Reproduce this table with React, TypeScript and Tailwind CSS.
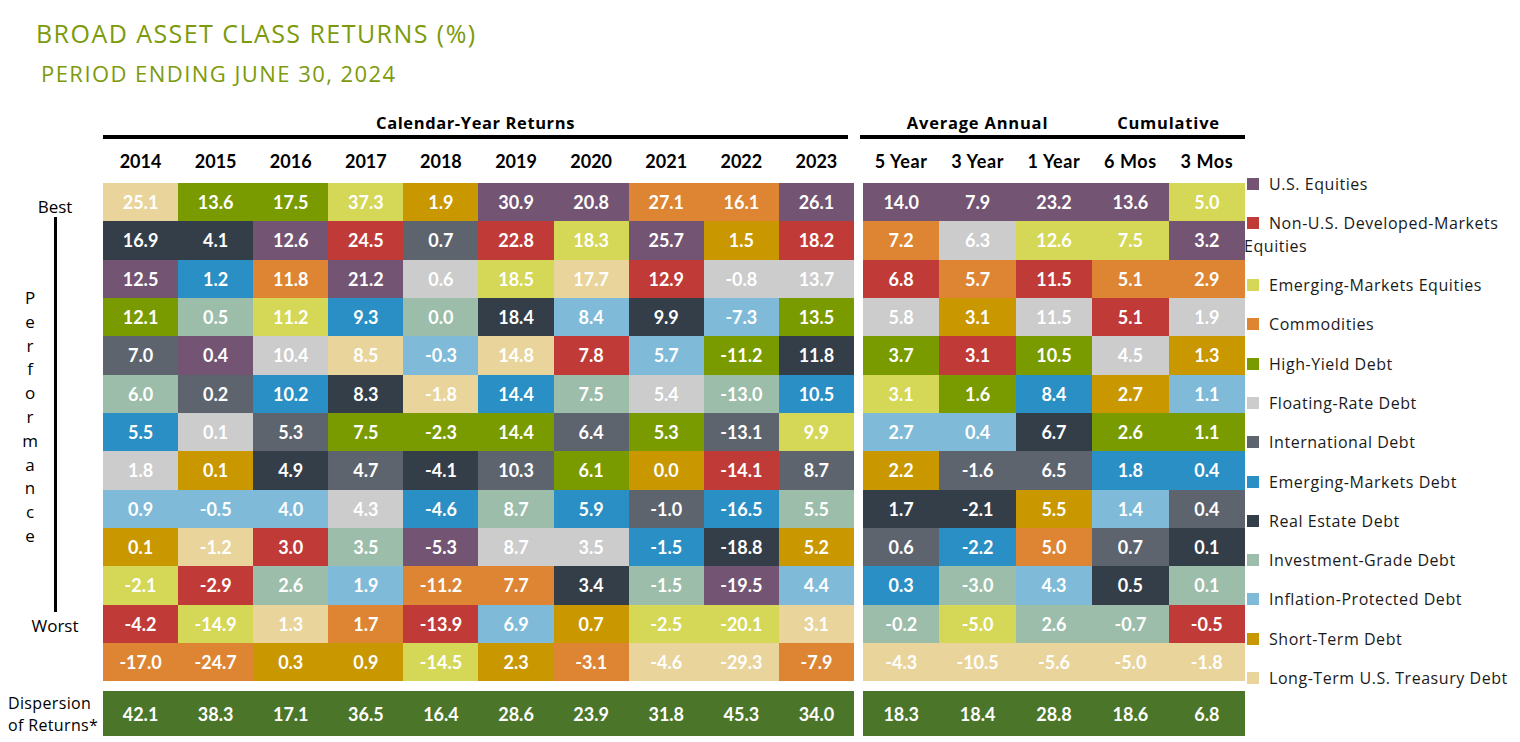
import React from "react";

type Cat =
  | "US"
  | "NU"
  | "EME"
  | "COM"
  | "HY"
  | "FR"
  | "ID"
  | "EMD"
  | "RE"
  | "IG"
  | "IP"
  | "ST"
  | "LT";

const bg: Record<Cat, string> = {
  US: "bg-[#735472]",
  NU: "bg-[#c03a37]",
  EME: "bg-[#d5d756]",
  COM: "bg-[#dd8533]",
  HY: "bg-[#7a9b00]",
  FR: "bg-[#cccccc]",
  ID: "bg-[#5d646e]",
  EMD: "bg-[#2a8fc4]",
  RE: "bg-[#333e48]",
  IG: "bg-[#9bbda9]",
  IP: "bg-[#7fbbd9]",
  ST: "bg-[#c99700]",
  LT: "bg-[#e9d49b]",
};

const legend: { cat: Cat; label: React.ReactNode }[] = [
  { cat: "US", label: "U.S. Equities" },
  {
    cat: "NU",
    label: (
      <>
        Non-U.S. Developed-Markets
        <br />
        Equities
      </>
    ),
  },
  { cat: "EME", label: "Emerging-Markets Equities" },
  { cat: "COM", label: "Commodities" },
  { cat: "HY", label: "High-Yield Debt" },
  { cat: "FR", label: "Floating-Rate Debt" },
  { cat: "ID", label: "International Debt" },
  { cat: "EMD", label: "Emerging-Markets Debt" },
  { cat: "RE", label: "Real Estate Debt" },
  { cat: "IG", label: "Investment-Grade Debt" },
  { cat: "IP", label: "Inflation-Protected Debt" },
  { cat: "ST", label: "Short-Term Debt" },
  { cat: "LT", label: "Long-Term U.S. Treasury Debt" },
];

// each column listed best -> worst
const col = (s: string): [string, Cat][] =>
  s
    .trim()
    .split(/\s*,\s*/)
    .map((p) => {
      const [v, c] = p.split(" ");
      return [v, c as Cat];
    });

const calendar = [
  { year: "2014", cells: col("25.1 LT, 16.9 RE, 12.5 US, 12.1 HY, 7.0 ID, 6.0 IG, 5.5 EMD, 1.8 FR, 0.9 IP, 0.1 ST, -2.1 EME, -4.2 NU, -17.0 COM"), disp: "42.1" },
  { year: "2015", cells: col("13.6 HY, 4.1 RE, 1.2 EMD, 0.5 IG, 0.4 US, 0.2 ID, 0.1 FR, 0.1 ST, -0.5 IP, -1.2 LT, -2.9 NU, -14.9 EME, -24.7 COM"), disp: "38.3" },
  { year: "2016", cells: col("17.5 HY, 12.6 US, 11.8 COM, 11.2 EME, 10.4 FR, 10.2 EMD, 5.3 ID, 4.9 RE, 4.0 IP, 3.0 NU, 2.6 IG, 1.3 LT, 0.3 ST"), disp: "17.1" },
  { year: "2017", cells: col("37.3 EME, 24.5 NU, 21.2 US, 9.3 EMD, 8.5 LT, 8.3 RE, 7.5 HY, 4.7 ID, 4.3 FR, 3.5 IG, 1.9 IP, 1.7 COM, 0.9 ST"), disp: "36.5" },
  { year: "2018", cells: col("1.9 ST, 0.7 ID, 0.6 FR, 0.0 IG, -0.3 IP, -1.8 LT, -2.3 HY, -4.1 RE, -4.6 EMD, -5.3 US, -11.2 COM, -13.9 NU, -14.5 EME"), disp: "16.4" },
  { year: "2019", cells: col("30.9 US, 22.8 NU, 18.5 EME, 18.4 RE, 14.8 LT, 14.4 EMD, 14.4 HY, 10.3 ID, 8.7 IG, 8.7 FR, 7.7 COM, 6.9 IP, 2.3 ST"), disp: "28.6" },
  { year: "2020", cells: col("20.8 US, 18.3 EME, 17.7 LT, 8.4 IP, 7.8 NU, 7.5 IG, 6.4 ID, 6.1 HY, 5.9 EMD, 3.5 FR, 3.4 RE, 0.7 ST, -3.1 COM"), disp: "23.9" },
  { year: "2021", cells: col("27.1 COM, 25.7 US, 12.9 NU, 9.9 RE, 5.7 IP, 5.4 FR, 5.3 HY, 0.0 ST, -1.0 ID, -1.5 EMD, -1.5 IG, -2.5 EME, -4.6 LT"), disp: "31.8" },
  { year: "2022", cells: col("16.1 COM, 1.5 ST, -0.8 FR, -7.3 IP, -11.2 HY, -13.0 IG, -13.1 ID, -14.1 NU, -16.5 EMD, -18.8 RE, -19.5 US, -20.1 EME, -29.3 LT"), disp: "45.3" },
  { year: "2023", cells: col("26.1 US, 18.2 NU, 13.7 FR, 13.5 HY, 11.8 RE, 10.5 EMD, 9.9 EME, 8.7 ID, 5.5 IG, 5.2 ST, 4.4 IP, 3.1 LT, -7.9 COM"), disp: "34.0" },
];

const trailing = [
  { year: "5 Year", cells: col("14.0 US, 7.2 COM, 6.8 NU, 5.8 FR, 3.7 HY, 3.1 EME, 2.7 IP, 2.2 ST, 1.7 RE, 0.6 ID, 0.3 EMD, -0.2 IG, -4.3 LT"), disp: "18.3" },
  { year: "3 Year", cells: col("7.9 US, 6.3 FR, 5.7 COM, 3.1 ST, 3.1 NU, 1.6 HY, 0.4 IP, -1.6 ID, -2.1 RE, -2.2 EMD, -3.0 IG, -5.0 EME, -10.5 LT"), disp: "18.4" },
  { year: "1 Year", cells: col("23.2 US, 12.6 EME, 11.5 NU, 11.5 FR, 10.5 HY, 8.4 EMD, 6.7 RE, 6.5 ID, 5.5 ST, 5.0 COM, 4.3 IP, 2.6 IG, -5.6 LT"), disp: "28.8" },
  { year: "6 Mos", cells: col("13.6 US, 7.5 EME, 5.1 COM, 5.1 NU, 4.5 FR, 2.7 ST, 2.6 HY, 1.8 EMD, 1.4 IP, 0.7 ID, 0.5 RE, -0.7 IG, -5.0 LT"), disp: "18.6" },
  { year: "3 Mos", cells: col("5.0 EME, 3.2 US, 2.9 COM, 1.9 FR, 1.3 ST, 1.1 IP, 1.1 HY, 0.4 EMD, 0.4 ID, 0.1 RE, 0.1 IG, -0.5 NU, -1.8 LT"), disp: "6.8" },
];

type Col = { year: string; cells: [string, Cat][]; disp: string };

function Block({ cols, gridClass, headClass }: { cols: Col[]; gridClass: string; headClass: string }) {
  const rows = Array.from({ length: 13 }, (_, r) => r);
  return (
    <>
      <div className={`grid ${gridClass} h-[44px] items-center`}>
        {cols.map((c) => (
          <div key={c.year} className={`text-center text-[18px] leading-[22px] font-bold text-black ${headClass}`}>
            {c.year}
          </div>
        ))}
      </div>
      <div className="flex flex-col">
        {rows.map((r) => (
          <div key={r} className={`grid ${gridClass} h-[38.33px]`}>
            {cols.map((c) => {
              const [v, cat] = c.cells[r];
              return (
                <div
                  key={c.year}
                  className={`${bg[cat]} flex items-center justify-center text-white font-bold text-[18px] leading-none`}
                >
                  {v}
                </div>
              );
            })}
          </div>
        ))}
      </div>
      <div className={`grid ${gridClass} h-[45px] mt-[10px] bg-[#4b762a]`}>
        {cols.map((c) => (
          <div key={c.year} className="flex items-center justify-center text-white font-bold text-[18px] leading-none">
            {c.disp}
          </div>
        ))}
      </div>
    </>
  );
}

export default function App() {
  return (
    <div className="w-[1520px] h-[742px] bg-white overflow-hidden font-['Lato',sans-serif] text-[#111]">
      <div className="pl-[36px] pt-[18px] font-['Open_Sans',sans-serif] text-[25px] leading-[30px] tracking-[1.45px] text-[#7c9a0b]">
        BROAD ASSET CLASS RETURNS (%)
      </div>
      <div className="pl-[41px] mt-[12px] font-['Open_Sans',sans-serif] text-[22px] leading-[26px] tracking-[1.45px] text-[#7c9a0b]">
        PERIOD ENDING JUNE 30, 2024
      </div>

      <div className="flex mt-[25px]">
        {/* axis labels */}
        <div className="w-[103px] shrink-0 flex flex-col font-['Open_Sans',sans-serif]">
          <div className="h-[72px]" />
          <div className="h-[498.3px] flex">
            <div className="w-[40px] pl-[22px] flex flex-col pt-[103px]">
              {"Performance".split("").map((ch, i) => (
                <div key={i} className="w-[16px] text-center text-[17px] leading-[23.8px] text-black">
                  {ch}
                </div>
              ))}
            </div>
            <div className="w-[30px] flex flex-col items-center">
              <div className="mt-[14px] text-[17px] leading-[20px] text-black whitespace-nowrap">Best</div>
              <div className="w-[3px] h-[395px] bg-black" />
              <div className="mt-[4px] text-[17px] leading-[20px] text-black whitespace-nowrap">Worst</div>
            </div>
          </div>
          <div className="h-[45px] mt-[10px] pl-[8px] flex flex-col justify-center text-[16px] leading-[22px] tracking-[0.35px] text-black whitespace-nowrap">
            <span>Dispersion</span>
            <span>of Returns*</span>
          </div>
        </div>

        {/* calendar-year block */}
        <div className="w-[751px] shrink-0 flex flex-col">
          <div className="h-[24px] mr-[6px] text-center font-['Open_Sans',sans-serif] text-[16.5px] leading-[24px] tracking-[0.6px] font-bold text-black">
            Calendar-Year Returns
          </div>
          <div className="h-[4px] mr-[6px] bg-black" />
          <Block cols={calendar} gridClass="grid-cols-10" headClass="" />
        </div>

        <div className="w-[9px] shrink-0" />

        {/* trailing block */}
        <div className="w-[382px] shrink-0 flex flex-col">
          <div className="h-[24px] flex font-['Open_Sans',sans-serif] text-[16.5px] leading-[24px] tracking-[0.8px] font-bold text-black">
            <div className="w-[229px] text-center">Average Annual</div>
            <div className="flex-1 text-center">Cumulative</div>
          </div>
          <div className="h-[4px] -ml-[3px] bg-black" />
          <Block cols={trailing} gridClass="grid-cols-5" headClass="tracking-[0.6px]" />
        </div>

        {/* legend */}
        <div className="flex-1 -ml-[1px] pt-[61.5px] flex flex-col gap-[16.3px] font-['Open_Sans',sans-serif]">
          {legend.map((l) => (
            <div key={l.cat} className="text-[16px] leading-[23px] tracking-[0.55px] text-[#1a1a1a] whitespace-nowrap">
              <span className={`inline-block w-[12px] h-[12px] ml-[3px] mr-[10px] ${bg[l.cat]}`} />
              {l.label}
            </div>
          ))}
        </div>
      </div>
    </div>
  );
}
